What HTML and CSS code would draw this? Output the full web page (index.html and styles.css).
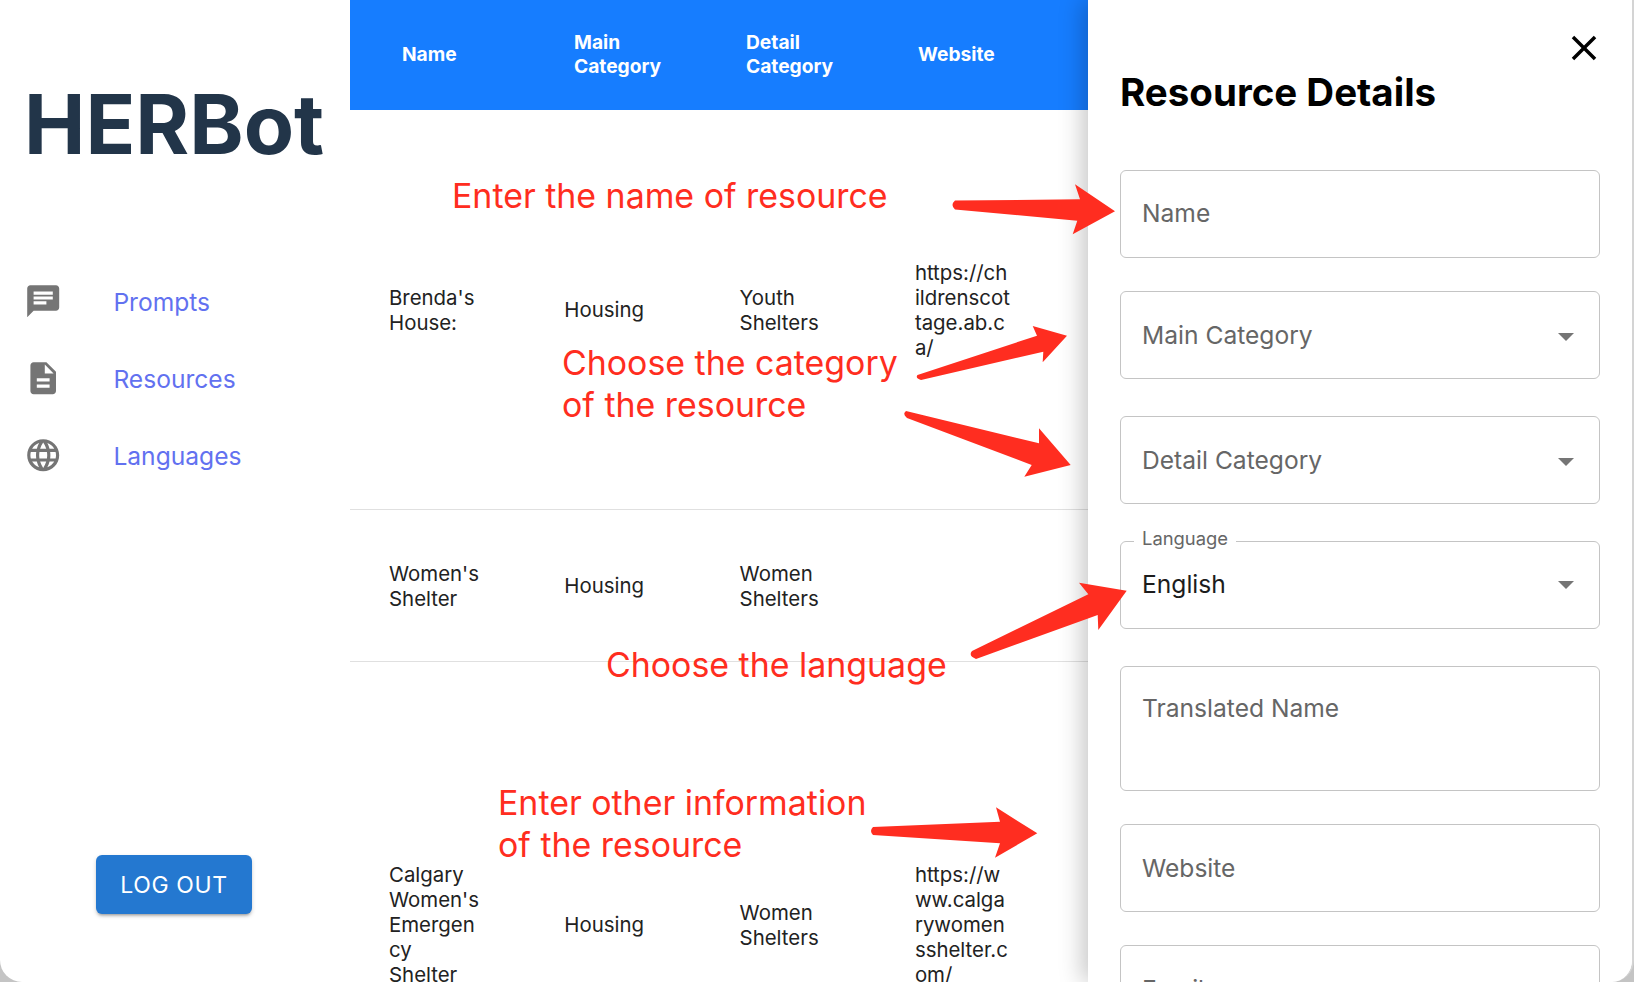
FILE: index.html
```html
<!DOCTYPE html>
<html>
<head>
	<meta charset="UTF-8">
	<title>HERBot</title>
	<link rel="stylesheet" href="styles.css">
</head>
<body>
	<div class="window">
		<div class="sidebar">
			<h1 class="logo">HERBot</h1>
			<ul class="nav">
				<li>
					<svg viewBox="0 0 24 24"><path d="M20 2H4c-1.1 0-1.99.9-1.99 2L2 22l4-4h14c1.1 0 2-.9 2-2V4c0-1.1-.9-2-2-2zM6 9h12v2H6V9zm8 5H6v-2h8v2zm4-6H6V6h12v2z"/></svg>
					<a href="#">Prompts</a>
				</li>
				<li>
					<svg viewBox="0 0 24 24"><path d="M14 2H6c-1.1 0-1.99.9-1.99 2L4 20c0 1.1.89 2 1.99 2H18c1.1 0 2-.9 2-2V8l-6-6zm2 16H8v-2h8v2zm0-4H8v-2h8v2zm-3-5V3.5L18.5 9H13z"/></svg>
					<a href="#">Resources</a>
				</li>
				<li>
					<svg viewBox="0 0 24 24"><path d="M11.99 2C6.47 2 2 6.48 2 12s4.47 10 9.99 10C17.52 22 22 17.52 22 12S17.52 2 11.99 2zm6.93 6h-2.95c-.32-1.25-.78-2.45-1.38-3.56 1.84.63 3.37 1.91 4.33 3.56zM12 4.04c.83 1.2 1.48 2.53 1.91 3.96h-3.82c.43-1.43 1.08-2.76 1.91-3.96zM4.26 14C4.1 13.36 4 12.69 4 12s.1-1.36.26-2h3.38c-.08.66-.14 1.32-.14 2 0 .68.06 1.34.14 2H4.26zm.82 2h2.95c.32 1.25.78 2.45 1.38 3.56-1.84-.63-3.37-1.9-4.33-3.56zm2.95-8H5.08c.96-1.66 2.49-2.93 4.33-3.56C8.81 5.55 8.35 6.75 8.03 8zM12 19.96c-.83-1.2-1.48-2.53-1.91-3.96h3.82c-.43 1.43-1.08 2.76-1.91 3.96zM14.34 14H9.66c-.09-.66-.16-1.32-.16-2 0-.68.07-1.35.16-2h4.68c.09.65.16 1.32.16 2 0 .68-.07 1.34-.16 2zm.25 5.56c.6-1.11 1.06-2.31 1.38-3.56h2.95c-.96 1.65-2.49 2.93-4.33 3.56zM16.36 14c.08-.66.14-1.32.14-2 0-.68-.06-1.34-.14-2h3.38c.16.64.26 1.31.26 2s-.1 1.36-.26 2h-3.38z"/></svg>
					<a href="#">Languages</a>
				</li>
			</ul>
			<button class="logout">LOG OUT</button>
		</div>

		<div class="content">
			<div class="table-head">
				<div>Name</div>
				<div>Main Category</div>
				<div>Detail Category</div>
				<div>Website</div>
			</div>
			<div class="row row-one">
				<div>Brenda's House:</div>
				<div>Housing</div>
				<div>Youth Shelters</div>
				<div class="url">https://childrenscottage.ab.ca/</div>
			</div>
			<div class="row row-two">
				<div>Women's Shelter</div>
				<div>Housing</div>
				<div>Women Shelters</div>
				<div class="url"></div>
			</div>
			<div class="row row-three">
				<div>Calgary Women's Emergen<br>cy<br>Shelter</div>
				<div>Housing</div>
				<div>Women Shelters</div>
				<div class="url">https://www.calgarywomensshelter.com/</div>
			</div>
		</div>

		<div class="drawer">
			<div class="drawer-close">
				<svg viewBox="0 0 24 24"><path d="M19 6.41 17.59 5 12 10.59 6.41 5 5 6.41 10.59 12 5 17.59 6.41 19 12 13.41 17.59 19 19 17.59 13.41 12z"/></svg>
			</div>
			<h2>Resource Details</h2>
			<div class="field field-name">Name</div>
			<div class="field select">Main Category</div>
			<div class="field select">Detail Category</div>
			<fieldset class="field select filled">
				<legend>Language</legend>
				English
			</fieldset>
			<div class="field tall">Translated Name</div>
			<div class="field short-gap">Website</div>
			<div class="field short-gap">Email</div>
		</div>

		<div class="note note-name">Enter the name of resource</div>
		<div class="note note-category">Choose the category<br>of the resource</div>
		<div class="note note-language">Choose the language</div>
		<div class="note note-other">Enter other information<br>of the resource</div>

		<svg class="arrows" viewBox="0 0 1634 982">
			<path d="M955 200.500L1080 199.300L1075 184.300L1115 211.300L1072.700 234.300L1077.300 220.700L955 209.500Q950 205 955 200.500Z"/>
			<path d="M917.500 375L1037 335.700L1032.700 326L1067 335.700L1042.700 362.300L1043.300 351.700L921 380Q915 378 917.500 375Z"/>
			<path d="M906 411L1039 443.300L1039 428.300L1070.700 465L1024.300 476.700L1031.700 465L907 418Q902 414 906 411Z"/>
			<path d="M972 651L1088.300 594.300L1079 582.700L1126.700 590.700L1098.300 630L1097.700 615L976 659Q968 656 972 651Z"/>
			<path d="M873 827L1000 821.700L996 807.300L1037.300 833.300L995 857.700L1000 843.300L873 835Q869 831 873 827Z"/>
		</svg>
	</div>
</body>
</html>
```

FILE: styles.css
```css
* {
	box-sizing: border-box;
}
html, body {
	height: 100%;
}
body {
	margin: 0;
	background: #c4c4c4;
	font-family: Inter, "Liberation Sans", sans-serif;
	overflow: hidden;
}
.window {
	position: relative;
	display: flex;
	height: 982px;
	background: #fff;
	border-right: 2px solid #d4d4d4;
	border-radius: 0 0 22px 22px;
	overflow: hidden;
}

/* left side */
.sidebar {
	position: relative;
	flex: 0 0 350px;
	padding: 79px 0 0 24px;
}
.logo {
	margin: 0;
	font-size: 82.200px;
	line-height: 90px;
	font-weight: 700;
	color: #223549;
}
.nav {
	list-style: none;
	margin: 94px 0 0;
	padding: 0;
}
.nav li {
	display: flex;
	align-items: center;
	height: 77px;
}
.nav svg {
	width: 38.4px;
	height: 38.4px;
	fill: #757575;
}
.nav a {
	margin-left: 51px;
	font-size: 24.600px;
	color: #6271f0;
	text-decoration: none;
}
.logout {
	position: absolute;
	left: 96px;
	top: 855px;
	width: 156px;
	height: 59px;
	border: 0;
	border-radius: 6px;
	background: #2478d0;
	color: #fff;
	font-family: inherit;
	font-size: 23px;
	letter-spacing: 0.6px;
	box-shadow: 0 3px 3px -2px rgba(0,0,0,.3), 0 2px 4px rgba(0,0,0,.18);
}

/* table */
.content {
	flex: 0 0 738px;
	min-width: 0;
}
.table-head {
	display: grid;
	grid-template-columns: repeat(4, 172px);
	align-items: center;
	height: 110px;
	padding: 0 0 2px 52px;
	background: #167dff;
	color: #fff;
	font-size: 19.200px;
	font-weight: 700;
	line-height: 24px;
}
.table-head div {
	width: 110px;
}
.row {
	display: grid;
	grid-template-columns: repeat(4, 175.300px);
	align-items: center;
	padding-left: 39px;
	font-size: 20.400px;
	line-height: 25px;
	color: #222;
	border-bottom: 1px solid #e0e0e0;
}
.row div {
	width: 98px;
}
.row-one {
	height: 400px;
}
.row-two {
	height: 152px;
}
.row-three {
	height: 526px;
}
.row .url {
	width: 96.500px;
	word-break: break-all;
}

/* drawer */
.drawer {
	flex: 0 0 546px;
	position: relative;
	padding: 0 34px 0 32px;
	background: #fff;
	box-shadow: -6px 0 22px rgba(0,0,0,.22);
}
.drawer-close {
	position: absolute;
	right: 29px;
	top: 27px;
	width: 42px;
	height: 42px;
}
.drawer h2 {
	margin: 0;
	padding-top: 70px;
	font-size: 38.500px;
	line-height: 44px;
	font-weight: 700;
	color: #000;
}
.field {
	position: relative;
	display: flex;
	align-items: center;
	width: 480px;
	height: 88px;
	margin: 37px 0 0;
	padding: 0 21px;
	border: 1px solid #c4c4c4;
	border-radius: 6px;
	font-size: 24.600px;
	color: #666;
}
.field-name {
	margin-top: 56px;
	padding-bottom: 2px;
}
.field-name + .field {
	margin-top: 33px;
}
.select::after {
	content: "";
	position: absolute;
	right: 25px;
	top: 41px;
	border-left: 8px solid transparent;
	border-right: 8px solid transparent;
	border-top: 8px solid #757575;
}
fieldset.filled {
	display: block;
	min-width: 0;
	height: 98px;
	margin-top: 27px;
	padding: 0 21px;
	line-height: 66px;
	color: #1c1c1c;
}
fieldset.filled::after {
	top: 30px;
}
fieldset.filled legend {
	padding: 0 8px;
	margin-left: -8px;
	font-size: 18.400px;
	line-height: 20px;
	height: 20px;
	color: #666;
	transform: translateY(-3px);
}
.tall {
	align-items: flex-start;
	height: 125px;
	padding-top: 26px;
}
.short-gap {
	margin-top: 33px;
}

/* red notes drawn over the page */
.note {
	position: absolute;
	font-size: 33.900px;
	line-height: 42px;
	color: #ff2d20;
	white-space: nowrap;
}
.note-name {
	left: 452px;
	top: 175px;
}
.note-category {
	left: 562px;
	top: 342px;
}
.note-language {
	left: 606px;
	top: 644px;
}
.note-other {
	left: 498px;
	top: 782px;
}
.arrows {
	position: absolute;
	left: 0;
	top: 0;
	width: 1634px;
	height: 982px;
	fill: #ff2d20;
	pointer-events: none;
}
```
